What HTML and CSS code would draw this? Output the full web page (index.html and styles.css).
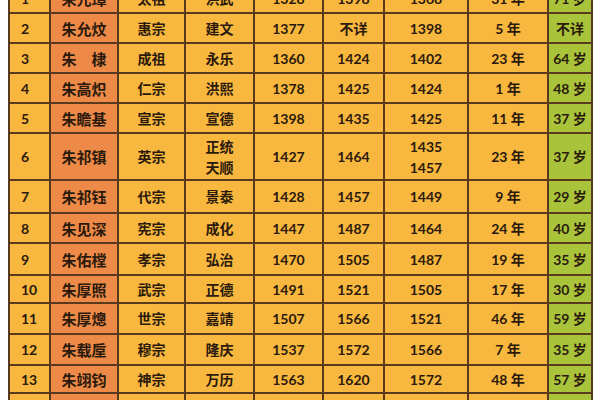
FILE: index.html
```html
<!DOCTYPE html>
<html lang="zh">
<head>
<meta charset="utf-8">
<title>明朝皇帝</title>
<link rel="stylesheet" href="styles.css">
</head>
<body>
<table class="emperors">
  <colgroup>
    <col class="c-no"><col class="c-name"><col class="c-temple"><col class="c-era">
    <col class="c-born"><col class="c-died"><col class="c-start"><col class="c-len"><col class="c-age">
  </colgroup>
  <tbody>
    <tr><td>1</td><td class="name">朱元璋</td><td>太祖</td><td>洪武</td><td>1328</td><td>1398</td><td>1368</td><td>31 年</td><td class="age">71 岁</td></tr>
    <tr><td>2</td><td class="name">朱允炆</td><td>惠宗</td><td>建文</td><td>1377</td><td>不详</td><td>1398</td><td>5 年</td><td class="age">不详</td></tr>
    <tr><td>3</td><td class="name">朱&emsp;棣</td><td>成祖</td><td>永乐</td><td>1360</td><td>1424</td><td>1402</td><td>23 年</td><td class="age">64 岁</td></tr>
    <tr><td>4</td><td class="name">朱高炽</td><td>仁宗</td><td>洪熙</td><td>1378</td><td>1425</td><td>1424</td><td>1 年</td><td class="age">48 岁</td></tr>
    <tr><td>5</td><td class="name">朱瞻基</td><td>宣宗</td><td>宣德</td><td>1398</td><td>1435</td><td>1425</td><td>11 年</td><td class="age">37 岁</td></tr>
    <tr class="tall"><td>6</td><td class="name">朱祁镇</td><td>英宗</td><td>正统<br>天顺</td><td>1427</td><td>1464</td><td>1435<br>1457</td><td>23 年</td><td class="age">37 岁</td></tr>
    <tr><td>7</td><td class="name">朱祁钰</td><td>代宗</td><td>景泰</td><td>1428</td><td>1457</td><td>1449</td><td>9 年</td><td class="age">29 岁</td></tr>
    <tr><td>8</td><td class="name">朱见深</td><td>宪宗</td><td>成化</td><td>1447</td><td>1487</td><td>1464</td><td>24 年</td><td class="age">40 岁</td></tr>
    <tr><td>9</td><td class="name">朱佑樘</td><td>孝宗</td><td>弘治</td><td>1470</td><td>1505</td><td>1487</td><td>19 年</td><td class="age">35 岁</td></tr>
    <tr><td>10</td><td class="name">朱厚照</td><td>武宗</td><td>正德</td><td>1491</td><td>1521</td><td>1505</td><td>17 年</td><td class="age">30 岁</td></tr>
    <tr><td>11</td><td class="name">朱厚熜</td><td>世宗</td><td>嘉靖</td><td>1507</td><td>1566</td><td>1521</td><td>46 年</td><td class="age">59 岁</td></tr>
    <tr><td>12</td><td class="name">朱载垕</td><td>穆宗</td><td>隆庆</td><td>1537</td><td>1572</td><td>1566</td><td>7 年</td><td class="age">35 岁</td></tr>
    <tr><td>13</td><td class="name">朱翊钧</td><td>神宗</td><td>万历</td><td>1563</td><td>1620</td><td>1572</td><td>48 年</td><td class="age">57 岁</td></tr>
    <tr><td>14</td><td class="name">朱由校</td><td>熹宗</td><td>天启</td><td>1605</td><td>1627</td><td>1620</td><td>7 年</td><td class="age">23 岁</td></tr>
  </tbody>
</table>
</body>
</html>
```

FILE: styles.css
```css
html, body {
  margin: 0;
  padding: 0;
  background: #ffffff;
  overflow: hidden;
}

body {
  width: 600px;
  height: 400px;
  padding-left: 8px;
  box-sizing: border-box;
}

.emperors {
  margin-top: -18px;
  width: 583px;
  table-layout: fixed;
  border-collapse: collapse;
  font-family: "Lato", "Noto Sans CJK SC", sans-serif;
  font-weight: 700;
  font-size: 14px;
  color: #2b1a0c;
  background: #f8b73e;
}

.c-no { width: 41px; }
.c-name { width: 68px; }
.c-temple { width: 67px; }
.c-era { width: 69px; }
.c-born { width: 69px; }
.c-died { width: 61px; }
.c-start { width: 84px; }
.c-len { width: 80px; }
.c-age { width: 44px; }

.emperors td {
  height: 28px;
  padding: 0;
  border: 2px solid #5a3a1c;
  text-align: center;
  vertical-align: middle;
  line-height: 21px;
  white-space: nowrap;
}

.emperors td:first-child {
  text-align: left;
  padding-left: 11px;
}

.emperors td.name {
  background: #ee8a47;
  font-family: "Noto Sans CJK SC", sans-serif;
  font-size: 15px;
}

.emperors td.age {
  background: #a9c43b;
}

.emperors tr.tall td { height: 45px; }
.emperors tr:nth-child(7) td { height: 31px; }
.emperors tr:nth-child(9) td { height: 30px; }
.emperors tr:nth-child(10) td { height: 26px; }
.emperors tr:nth-child(11) td { height: 29px; }
.emperors tr:nth-child(12) td { height: 29px; }
.emperors tr:nth-child(13) td { height: 26px; }
```
